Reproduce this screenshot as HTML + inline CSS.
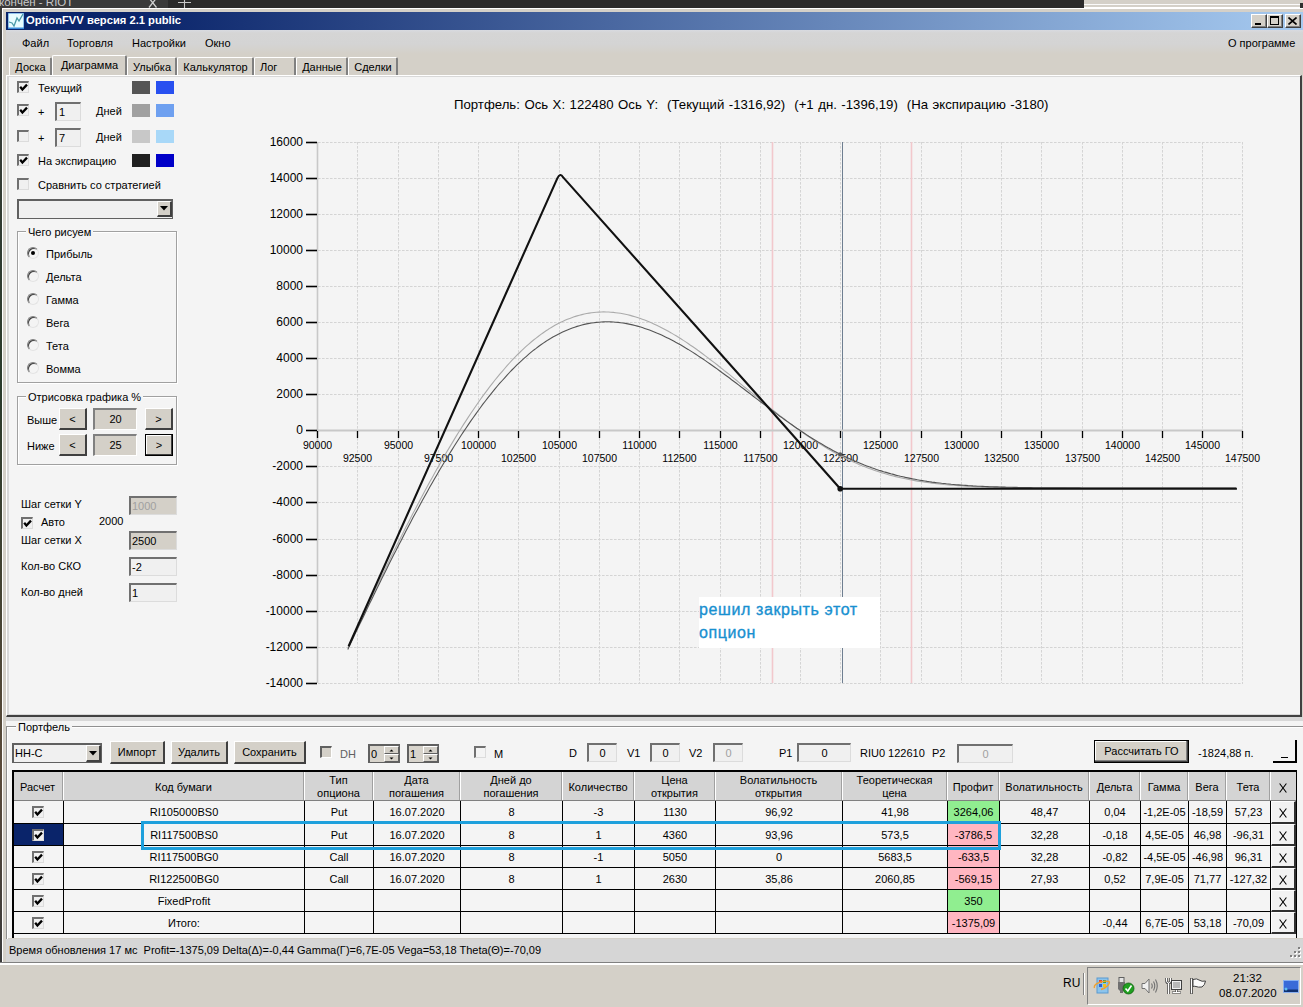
<!DOCTYPE html><html><head><meta charset="utf-8"><style>
*{margin:0;padding:0;box-sizing:border-box}
html,body{width:1303px;height:1007px;overflow:hidden;background:#d4d0c8;font-family:"Liberation Sans", sans-serif;font-size:11px;color:#000}
.ab{position:absolute}
.t{position:absolute;white-space:pre;line-height:13px}
.cb{position:absolute;width:12px;height:12px;background:#f0f0f0;border-top:2px solid #707070;border-left:2px solid #707070;border-right:1px solid #dcdcdc;border-bottom:1px solid #dcdcdc}
.cb svg{position:absolute;left:0px;top:0px}
.edit{position:absolute;background:#f0f0f0;border-top:2px solid #707070;border-left:2px solid #707070;border-right:1px solid #dcdcdc;border-bottom:1px solid #dcdcdc}
.btn{position:absolute;background:#d4d0c8;border-top:1px solid #fff;border-left:1px solid #fff;border-right:2px solid #404040;border-bottom:2px solid #404040;text-align:center}
.grp{position:absolute;border:1px solid #a0a0a0;box-shadow:inset 1px 1px 0 #fff, 1px 1px 0 #fff}
.rad{position:absolute;width:12px;height:12px;border-radius:50%;background:#f4f4f4;border:1px solid;border-color:#808080 #e4e4e4 #e4e4e4 #808080;box-shadow:inset 1px 1px 0 #404040}
</style></head><body>

<div class="ab" style="left:0;top:0;width:1084px;height:8px;background:#2b2b2b"></div>
<div class="ab" style="left:0;top:0;width:168px;height:8px;background:#3a3a3a"></div>
<div class="t" style="left:-1px;top:-4px;color:#c8c8c8;font-size:11.5px">кончен - RIOT</div>
<svg class="ab" style="left:140px;top:0" width="60" height="8"><path d="M9,-2 L16.5,7.5 M16.5,-2 L9,7.5" stroke="#d0d0d0" stroke-width="1.3"/><path d="M38,2.5 L51,2.5 M44.5,-3 L44.5,8" stroke="#c8c8c8" stroke-width="1.1"/></svg>
<div class="ab" style="left:1084px;top:0;width:219px;height:8px;background:#d4d0c8;border-bottom:1px solid #fff"></div>
<div class="ab" style="left:1084px;top:4px;width:217px;height:1px;background:#fafafa"></div>
<div class="ab" style="left:1300px;top:3px;width:3px;height:5px;background:#303030"></div>
<div class="ab" style="left:0;top:8px;width:2px;height:954px;background:linear-gradient(#3a3a3a,#2a3a2a 40%,#5a4a3a 80%,#3a3a3a)"></div>
<div class="ab" style="left:2px;top:8px;width:1301px;height:954px;background:#d4d0c8;border-top:1px solid #fff;border-left:1px solid #fff"></div>
<div class="ab" style="left:6px;top:12px;width:1297px;height:18px;background:linear-gradient(90deg,#0a246a 0%,#0a246a 10%,#a6caf0 100%)"></div>
<svg class="ab" style="left:8px;top:13px" width="16" height="16" viewBox="0 0 16 16">
<rect x="0" y="0" width="16" height="16" fill="#3a8ad8"/><rect x="0.5" y="0.5" width="15" height="14" fill="#e8fcff"/>
<polyline points="1,9 4,10 6,13 9,5 11,8 15,1" fill="none" stroke="#4a9aa8" stroke-width="1.3"/></svg>
<div class="t" style="left:26px;top:14px;color:#fff;font-weight:bold;font-size:11.2px">OptionFVV версия 2.1 public</div>
<div class="btn" style="left:1251px;top:14px;width:16px;height:14px;border-right:1px solid #404040;border-bottom:1px solid #404040;box-shadow:inset -1px -1px 0 #808080"></div>
<div class="btn" style="left:1267px;top:14px;width:16px;height:14px;border-right:1px solid #404040;border-bottom:1px solid #404040;box-shadow:inset -1px -1px 0 #808080"></div>
<div class="btn" style="left:1285px;top:14px;width:16px;height:14px;border-right:1px solid #404040;border-bottom:1px solid #404040;box-shadow:inset -1px -1px 0 #808080"></div>
<div class="ab" style="left:1255px;top:23px;width:6px;height:2px;background:#000"></div>
<div class="ab" style="left:1270px;top:16px;width:9px;height:9px;border:1px solid #000;border-top-width:2px"></div>
<svg class="ab" style="left:1288px;top:17px" width="9" height="8"><path d="M0.5,0.5 L8.5,7.5 M8.5,0.5 L0.5,7.5" stroke="#000" stroke-width="1.6"/></svg>
<div class="ab" style="left:6px;top:30px;width:1297px;height:24px;background:linear-gradient(#d8dae0 0px,#d5d5d5 3px,#d4d4d4 14px,#d4d0c8 24px)"></div>
<div class="t" style="left:22px;top:37px">Файл</div>
<div class="t" style="left:67px;top:37px">Торговля</div>
<div class="t" style="left:132px;top:37px">Настройки</div>
<div class="t" style="left:205px;top:37px">Окно</div>
<div class="t" style="left:1228px;top:37px">О программе</div>
<div class="ab" style="left:6px;top:54px;width:1297px;height:22px;background:#d4d0c8"></div>
<div class="ab" style="left:9px;top:57px;width:43px;height:19px;background:#d4d0c8;border-top:1px solid #fff;border-left:1px solid #fff;border-right:2px solid #808080;border-radius:2px 2px 0 0"></div>
<div class="t" style="left:9px;width:43px;text-align:center;top:61px">Доска</div>
<div class="ab" style="left:52px;top:55px;width:75px;height:21px;background:#d4d0c8;border-top:1px solid #fff;border-left:1px solid #fff;border-right:2px solid #808080;border-radius:2px 2px 0 0"></div>
<div class="t" style="left:52px;width:75px;text-align:center;top:59px">Диаграмма</div>
<div class="ab" style="left:127px;top:57px;width:50px;height:19px;background:#d4d0c8;border-top:1px solid #fff;border-left:1px solid #fff;border-right:2px solid #808080;border-radius:2px 2px 0 0"></div>
<div class="t" style="left:127px;width:50px;text-align:center;top:61px">Улыбка</div>
<div class="ab" style="left:177px;top:57px;width:77px;height:19px;background:#d4d0c8;border-top:1px solid #fff;border-left:1px solid #fff;border-right:2px solid #808080;border-radius:2px 2px 0 0"></div>
<div class="t" style="left:177px;width:77px;text-align:center;top:61px">Калькулятор</div>
<div class="ab" style="left:254px;top:57px;width:42px;height:19px;background:#d4d0c8;border-top:1px solid #fff;border-left:1px solid #fff;border-right:2px solid #808080;border-radius:2px 2px 0 0"></div>
<div class="t" style="left:260px;top:61px">Лог</div>
<div class="ab" style="left:296px;top:57px;width:52px;height:19px;background:#d4d0c8;border-top:1px solid #fff;border-left:1px solid #fff;border-right:2px solid #808080;border-radius:2px 2px 0 0"></div>
<div class="t" style="left:296px;width:52px;text-align:center;top:61px">Данные</div>
<div class="ab" style="left:348px;top:57px;width:50px;height:19px;background:#d4d0c8;border-top:1px solid #fff;border-left:1px solid #fff;border-right:2px solid #808080;border-radius:2px 2px 0 0"></div>
<div class="t" style="left:348px;width:50px;text-align:center;top:61px">Сделки</div>
<div class="ab" style="left:6px;top:75px;width:1296px;height:642px;border-top:1px solid #fff;border-left:1px solid #fff;border-right:2px solid #404040;border-bottom:2px solid #404040;background:#d8d8d8"></div>
<div class="ab" style="left:9px;top:77px;width:1291px;height:637px;background:#f4f4f4"></div>
<div class="cb" style="left:17px;top:81px"><svg width="9" height="9" viewBox="0 0 9 9"><path d="M1.2,3.8 L3.4,6.6 L8,1.6" fill="none" stroke="#000" stroke-width="2.3"/></svg></div>
<div class="t" style="left:38px;top:82px">Текущий</div>
<div class="ab" style="left:132px;top:81px;width:18px;height:13px;background:#555555"></div>
<div class="ab" style="left:156px;top:81px;width:18px;height:13px;background:#2850f0"></div>
<div class="cb" style="left:17px;top:104px"><svg width="9" height="9" viewBox="0 0 9 9"><path d="M1.2,3.8 L3.4,6.6 L8,1.6" fill="none" stroke="#000" stroke-width="2.3"/></svg></div>
<div class="t" style="left:38px;top:106px">+</div>
<div class="edit" style="left:55px;top:102px;width:26px;height:19px"><div class="t" style="left:2px;top:2px">1</div></div>
<div class="t" style="left:96px;top:105px">Дней</div>
<div class="ab" style="left:132px;top:104px;width:18px;height:13px;background:#a0a0a0"></div>
<div class="ab" style="left:156px;top:104px;width:18px;height:13px;background:#6ea0f0"></div>
<div class="cb" style="left:17px;top:130px"></div>
<div class="t" style="left:38px;top:132px">+</div>
<div class="edit" style="left:55px;top:128px;width:26px;height:19px"><div class="t" style="left:2px;top:2px">7</div></div>
<div class="t" style="left:96px;top:131px">Дней</div>
<div class="ab" style="left:132px;top:130px;width:18px;height:13px;background:#c8c8c8"></div>
<div class="ab" style="left:156px;top:130px;width:18px;height:13px;background:#a8d8f8"></div>
<div class="cb" style="left:17px;top:154px"><svg width="9" height="9" viewBox="0 0 9 9"><path d="M1.2,3.8 L3.4,6.6 L8,1.6" fill="none" stroke="#000" stroke-width="2.3"/></svg></div>
<div class="t" style="left:38px;top:155px">На экспирацию</div>
<div class="ab" style="left:132px;top:154px;width:18px;height:13px;background:#202020"></div>
<div class="ab" style="left:156px;top:154px;width:18px;height:13px;background:#0000c8"></div>
<div class="cb" style="left:17px;top:178px"></div>
<div class="t" style="left:38px;top:179px">Сравнить со стратегией</div>
<div class="edit" style="left:17px;top:199px;width:156px;height:20px;border-color:#606060 #606060 #606060 #606060;border-width:2px 1px 1px 2px"></div>
<div class="btn" style="left:157px;top:201px;width:15px;height:16px"></div>
<svg class="ab" style="left:160px;top:206px" width="9" height="5"><path d="M0,0 L8,0 L4,4.5Z" fill="#000"/></svg>
<div class="grp" style="left:17px;top:231px;width:160px;height:152px"></div>
<div class="t" style="left:26px;top:226px;background:#f4f4f4;padding:0 2px">Чего рисуем</div>
<div class="rad" style="left:27px;top:247px"></div>
<div class="ab" style="left:31px;top:251px;width:4px;height:4px;border-radius:50%;background:#000"></div>
<div class="t" style="left:46px;top:248px">Прибыль</div>
<div class="rad" style="left:27px;top:270px"></div>
<div class="t" style="left:46px;top:271px">Дельта</div>
<div class="rad" style="left:27px;top:293px"></div>
<div class="t" style="left:46px;top:294px">Гамма</div>
<div class="rad" style="left:27px;top:316px"></div>
<div class="t" style="left:46px;top:317px">Вега</div>
<div class="rad" style="left:27px;top:339px"></div>
<div class="t" style="left:46px;top:340px">Тета</div>
<div class="rad" style="left:27px;top:362px"></div>
<div class="t" style="left:46px;top:363px">Вомма</div>
<div class="grp" style="left:17px;top:396px;width:160px;height:69px"></div>
<div class="t" style="left:26px;top:391px;background:#f4f4f4;padding:0 2px">Отрисовка графика %</div>
<div class="t" style="left:27px;top:414px">Выше</div>
<div class="btn" style="left:59px;top:408px;width:28px;height:22px;line-height:20px">&lt;</div>
<div class="ab" style="left:93px;top:408px;width:44px;height:22px;background:#d4d0c8;border-top:2px solid #808080;border-left:2px solid #808080;border-bottom:1px solid #fff;border-right:1px solid #fff;text-align:center;line-height:18px">20</div>
<div class="btn" style="left:145px;top:408px;width:28px;height:22px;line-height:20px;">&gt;</div>
<div class="t" style="left:27px;top:440px">Ниже</div>
<div class="btn" style="left:59px;top:434px;width:28px;height:22px;line-height:20px">&lt;</div>
<div class="ab" style="left:93px;top:434px;width:44px;height:22px;background:#d4d0c8;border-top:2px solid #808080;border-left:2px solid #808080;border-bottom:1px solid #fff;border-right:1px solid #fff;text-align:center;line-height:18px">25</div>
<div class="btn" style="left:145px;top:434px;width:28px;height:22px;line-height:20px;border:1px solid #000;box-shadow:inset -1px -1px 0 #404040, inset 1px 1px 0 #fff">&gt;</div>
<div class="t" style="left:21px;top:498px">Шаг сетки Y</div>
<div class="edit" style="left:129px;top:496px;width:48px;height:19px;background:#d4d0c8;color:#a0a0a0"><div class="t" style="left:1px;top:2px">1000</div></div>
<div class="cb" style="left:21px;top:517px"><svg width="9" height="9" viewBox="0 0 9 9"><path d="M1.2,3.8 L3.4,6.6 L8,1.6" fill="none" stroke="#000" stroke-width="2.3"/></svg></div>
<div class="t" style="left:41px;top:516px">Авто</div>
<div class="t" style="left:99px;top:515px">2000</div>
<div class="t" style="left:21px;top:534px">Шаг сетки X</div>
<div class="edit" style="left:129px;top:531px;width:48px;height:19px;background:#d4d0c8"><div class="t" style="left:1px;top:2px">2500</div></div>
<div class="t" style="left:21px;top:560px">Кол-во СКО</div>
<div class="edit" style="left:129px;top:557px;width:48px;height:19px"><div class="t" style="left:1px;top:2px">-2</div></div>
<div class="t" style="left:21px;top:586px">Кол-во дней</div>
<div class="edit" style="left:129px;top:583px;width:48px;height:19px"><div class="t" style="left:1px;top:2px">1</div></div>
<div class="t" style="left:454px;top:98px;font-size:13.2px;word-spacing:0.85px">Портфель: Ось X: 122480 Ось Y:  (Текущий -1316,92)  (+1 дн. -1396,19)  (На экспирацию -3180)</div>
<svg class="ab" style="left:0;top:0" width="1303" height="720">
<line x1="317.5" y1="142" x2="317.5" y2="683" stroke="#d4d4d4" stroke-dasharray="2.6,1.4"/>
<line x1="357.5" y1="142" x2="357.5" y2="683" stroke="#d4d4d4" stroke-dasharray="2.6,1.4"/>
<line x1="398.5" y1="142" x2="398.5" y2="683" stroke="#d4d4d4" stroke-dasharray="2.6,1.4"/>
<line x1="438.5" y1="142" x2="438.5" y2="683" stroke="#d4d4d4" stroke-dasharray="2.6,1.4"/>
<line x1="478.5" y1="142" x2="478.5" y2="683" stroke="#d4d4d4" stroke-dasharray="2.6,1.4"/>
<line x1="518.5" y1="142" x2="518.5" y2="683" stroke="#d4d4d4" stroke-dasharray="2.6,1.4"/>
<line x1="559.5" y1="142" x2="559.5" y2="683" stroke="#d4d4d4" stroke-dasharray="2.6,1.4"/>
<line x1="599.5" y1="142" x2="599.5" y2="683" stroke="#d4d4d4" stroke-dasharray="2.6,1.4"/>
<line x1="639.5" y1="142" x2="639.5" y2="683" stroke="#d4d4d4" stroke-dasharray="2.6,1.4"/>
<line x1="679.5" y1="142" x2="679.5" y2="683" stroke="#d4d4d4" stroke-dasharray="2.6,1.4"/>
<line x1="720.5" y1="142" x2="720.5" y2="683" stroke="#d4d4d4" stroke-dasharray="2.6,1.4"/>
<line x1="760.5" y1="142" x2="760.5" y2="683" stroke="#d4d4d4" stroke-dasharray="2.6,1.4"/>
<line x1="800.5" y1="142" x2="800.5" y2="683" stroke="#d4d4d4" stroke-dasharray="2.6,1.4"/>
<line x1="840.5" y1="142" x2="840.5" y2="683" stroke="#d4d4d4" stroke-dasharray="2.6,1.4"/>
<line x1="880.5" y1="142" x2="880.5" y2="683" stroke="#d4d4d4" stroke-dasharray="2.6,1.4"/>
<line x1="921.5" y1="142" x2="921.5" y2="683" stroke="#d4d4d4" stroke-dasharray="2.6,1.4"/>
<line x1="961.5" y1="142" x2="961.5" y2="683" stroke="#d4d4d4" stroke-dasharray="2.6,1.4"/>
<line x1="1001.5" y1="142" x2="1001.5" y2="683" stroke="#d4d4d4" stroke-dasharray="2.6,1.4"/>
<line x1="1041.5" y1="142" x2="1041.5" y2="683" stroke="#d4d4d4" stroke-dasharray="2.6,1.4"/>
<line x1="1082.5" y1="142" x2="1082.5" y2="683" stroke="#d4d4d4" stroke-dasharray="2.6,1.4"/>
<line x1="1122.5" y1="142" x2="1122.5" y2="683" stroke="#d4d4d4" stroke-dasharray="2.6,1.4"/>
<line x1="1162.5" y1="142" x2="1162.5" y2="683" stroke="#d4d4d4" stroke-dasharray="2.6,1.4"/>
<line x1="1202.5" y1="142" x2="1202.5" y2="683" stroke="#d4d4d4" stroke-dasharray="2.6,1.4"/>
<line x1="1242.5" y1="142" x2="1242.5" y2="683" stroke="#d4d4d4" stroke-dasharray="2.6,1.4"/>
<line x1="318" y1="142.5" x2="1243" y2="142.5" stroke="#d4d4d4" stroke-dasharray="2.6,1.4"/>
<line x1="318" y1="178.5" x2="1243" y2="178.5" stroke="#d4d4d4" stroke-dasharray="2.6,1.4"/>
<line x1="318" y1="214.5" x2="1243" y2="214.5" stroke="#d4d4d4" stroke-dasharray="2.6,1.4"/>
<line x1="318" y1="250.5" x2="1243" y2="250.5" stroke="#d4d4d4" stroke-dasharray="2.6,1.4"/>
<line x1="318" y1="286.5" x2="1243" y2="286.5" stroke="#d4d4d4" stroke-dasharray="2.6,1.4"/>
<line x1="318" y1="322.5" x2="1243" y2="322.5" stroke="#d4d4d4" stroke-dasharray="2.6,1.4"/>
<line x1="318" y1="358.5" x2="1243" y2="358.5" stroke="#d4d4d4" stroke-dasharray="2.6,1.4"/>
<line x1="318" y1="394.5" x2="1243" y2="394.5" stroke="#d4d4d4" stroke-dasharray="2.6,1.4"/>
<line x1="318" y1="430.5" x2="1243" y2="430.5" stroke="#d4d4d4" stroke-dasharray="2.6,1.4"/>
<line x1="318" y1="466.5" x2="1243" y2="466.5" stroke="#d4d4d4" stroke-dasharray="2.6,1.4"/>
<line x1="318" y1="502.5" x2="1243" y2="502.5" stroke="#d4d4d4" stroke-dasharray="2.6,1.4"/>
<line x1="318" y1="539.5" x2="1243" y2="539.5" stroke="#d4d4d4" stroke-dasharray="2.6,1.4"/>
<line x1="318" y1="575.5" x2="1243" y2="575.5" stroke="#d4d4d4" stroke-dasharray="2.6,1.4"/>
<line x1="318" y1="611.5" x2="1243" y2="611.5" stroke="#d4d4d4" stroke-dasharray="2.6,1.4"/>
<line x1="318" y1="647.5" x2="1243" y2="647.5" stroke="#d4d4d4" stroke-dasharray="2.6,1.4"/>
<line x1="318" y1="683.5" x2="1243" y2="683.5" stroke="#d4d4d4" stroke-dasharray="2.6,1.4"/>
<line x1="772.5" y1="142" x2="772.5" y2="683" stroke="#f2c8cc" stroke-width="1.6"/>
<line x1="911.5" y1="142" x2="911.5" y2="683" stroke="#f2c8cc" stroke-width="1.6"/>
<line x1="842.5" y1="142" x2="842.5" y2="683" stroke="#6e7e90" stroke-width="1"/>
<line x1="317.5" y1="142" x2="317.5" y2="683" stroke="#c8c8c8" stroke-width="1.6"/>
<line x1="317" y1="430.5" x2="1243" y2="430.5" stroke="#c8c8c8" stroke-width="2"/>
<line x1="306" y1="142.5" x2="317" y2="142.5" stroke="#000" stroke-width="1.6"/>
<text x="303" y="146.0" text-anchor="end" font-size="12" font-family="Liberation Sans">16000</text>
<line x1="306" y1="178.5" x2="317" y2="178.5" stroke="#000" stroke-width="1.6"/>
<text x="303" y="182.0" text-anchor="end" font-size="12" font-family="Liberation Sans">14000</text>
<line x1="306" y1="214.5" x2="317" y2="214.5" stroke="#000" stroke-width="1.6"/>
<text x="303" y="218.0" text-anchor="end" font-size="12" font-family="Liberation Sans">12000</text>
<line x1="306" y1="250.5" x2="317" y2="250.5" stroke="#000" stroke-width="1.6"/>
<text x="303" y="254.0" text-anchor="end" font-size="12" font-family="Liberation Sans">10000</text>
<line x1="306" y1="286.5" x2="317" y2="286.5" stroke="#000" stroke-width="1.6"/>
<text x="303" y="290.0" text-anchor="end" font-size="12" font-family="Liberation Sans">8000</text>
<line x1="306" y1="322.5" x2="317" y2="322.5" stroke="#000" stroke-width="1.6"/>
<text x="303" y="326.0" text-anchor="end" font-size="12" font-family="Liberation Sans">6000</text>
<line x1="306" y1="358.5" x2="317" y2="358.5" stroke="#000" stroke-width="1.6"/>
<text x="303" y="362.0" text-anchor="end" font-size="12" font-family="Liberation Sans">4000</text>
<line x1="306" y1="394.5" x2="317" y2="394.5" stroke="#000" stroke-width="1.6"/>
<text x="303" y="398.0" text-anchor="end" font-size="12" font-family="Liberation Sans">2000</text>
<line x1="306" y1="430.5" x2="317" y2="430.5" stroke="#000" stroke-width="1.6"/>
<text x="303" y="434.0" text-anchor="end" font-size="12" font-family="Liberation Sans">0</text>
<line x1="306" y1="466.5" x2="317" y2="466.5" stroke="#000" stroke-width="1.6"/>
<text x="303" y="470.0" text-anchor="end" font-size="12" font-family="Liberation Sans">-2000</text>
<line x1="306" y1="502.5" x2="317" y2="502.5" stroke="#000" stroke-width="1.6"/>
<text x="303" y="506.0" text-anchor="end" font-size="12" font-family="Liberation Sans">-4000</text>
<line x1="306" y1="539.5" x2="317" y2="539.5" stroke="#000" stroke-width="1.6"/>
<text x="303" y="543.0" text-anchor="end" font-size="12" font-family="Liberation Sans">-6000</text>
<line x1="306" y1="575.5" x2="317" y2="575.5" stroke="#000" stroke-width="1.6"/>
<text x="303" y="579.0" text-anchor="end" font-size="12" font-family="Liberation Sans">-8000</text>
<line x1="306" y1="611.5" x2="317" y2="611.5" stroke="#000" stroke-width="1.6"/>
<text x="303" y="615.0" text-anchor="end" font-size="12" font-family="Liberation Sans">-10000</text>
<line x1="306" y1="647.5" x2="317" y2="647.5" stroke="#000" stroke-width="1.6"/>
<text x="303" y="651.0" text-anchor="end" font-size="12" font-family="Liberation Sans">-12000</text>
<line x1="306" y1="683.5" x2="317" y2="683.5" stroke="#000" stroke-width="1.6"/>
<text x="303" y="687.0" text-anchor="end" font-size="12" font-family="Liberation Sans">-14000</text>
<line x1="317.5" y1="431" x2="317.5" y2="438" stroke="#000" stroke-width="1.3"/>
<text x="317.5" y="449" text-anchor="middle" font-size="10.5" font-family="Liberation Sans">90000</text>
<line x1="357.5" y1="431" x2="357.5" y2="438" stroke="#000" stroke-width="1.3"/>
<text x="357.5" y="462" text-anchor="middle" font-size="10.5" font-family="Liberation Sans">92500</text>
<line x1="398.5" y1="431" x2="398.5" y2="438" stroke="#000" stroke-width="1.3"/>
<text x="398.5" y="449" text-anchor="middle" font-size="10.5" font-family="Liberation Sans">95000</text>
<line x1="438.5" y1="431" x2="438.5" y2="438" stroke="#000" stroke-width="1.3"/>
<text x="438.5" y="462" text-anchor="middle" font-size="10.5" font-family="Liberation Sans">97500</text>
<line x1="478.5" y1="431" x2="478.5" y2="438" stroke="#000" stroke-width="1.3"/>
<text x="478.5" y="449" text-anchor="middle" font-size="10.5" font-family="Liberation Sans">100000</text>
<line x1="518.5" y1="431" x2="518.5" y2="438" stroke="#000" stroke-width="1.3"/>
<text x="518.5" y="462" text-anchor="middle" font-size="10.5" font-family="Liberation Sans">102500</text>
<line x1="559.5" y1="431" x2="559.5" y2="438" stroke="#000" stroke-width="1.3"/>
<text x="559.5" y="449" text-anchor="middle" font-size="10.5" font-family="Liberation Sans">105000</text>
<line x1="599.5" y1="431" x2="599.5" y2="438" stroke="#000" stroke-width="1.3"/>
<text x="599.5" y="462" text-anchor="middle" font-size="10.5" font-family="Liberation Sans">107500</text>
<line x1="639.5" y1="431" x2="639.5" y2="438" stroke="#000" stroke-width="1.3"/>
<text x="639.5" y="449" text-anchor="middle" font-size="10.5" font-family="Liberation Sans">110000</text>
<line x1="679.5" y1="431" x2="679.5" y2="438" stroke="#000" stroke-width="1.3"/>
<text x="679.5" y="462" text-anchor="middle" font-size="10.5" font-family="Liberation Sans">112500</text>
<line x1="720.5" y1="431" x2="720.5" y2="438" stroke="#000" stroke-width="1.3"/>
<text x="720.5" y="449" text-anchor="middle" font-size="10.5" font-family="Liberation Sans">115000</text>
<line x1="760.5" y1="431" x2="760.5" y2="438" stroke="#000" stroke-width="1.3"/>
<text x="760.5" y="462" text-anchor="middle" font-size="10.5" font-family="Liberation Sans">117500</text>
<line x1="800.5" y1="431" x2="800.5" y2="438" stroke="#000" stroke-width="1.3"/>
<text x="800.5" y="449" text-anchor="middle" font-size="10.5" font-family="Liberation Sans">120000</text>
<line x1="840.5" y1="431" x2="840.5" y2="438" stroke="#000" stroke-width="1.3"/>
<text x="840.5" y="462" text-anchor="middle" font-size="10.5" font-family="Liberation Sans">122500</text>
<line x1="880.5" y1="431" x2="880.5" y2="438" stroke="#000" stroke-width="1.3"/>
<text x="880.5" y="449" text-anchor="middle" font-size="10.5" font-family="Liberation Sans">125000</text>
<line x1="921.5" y1="431" x2="921.5" y2="438" stroke="#000" stroke-width="1.3"/>
<text x="921.5" y="462" text-anchor="middle" font-size="10.5" font-family="Liberation Sans">127500</text>
<line x1="961.5" y1="431" x2="961.5" y2="438" stroke="#000" stroke-width="1.3"/>
<text x="961.5" y="449" text-anchor="middle" font-size="10.5" font-family="Liberation Sans">130000</text>
<line x1="1001.5" y1="431" x2="1001.5" y2="438" stroke="#000" stroke-width="1.3"/>
<text x="1001.5" y="462" text-anchor="middle" font-size="10.5" font-family="Liberation Sans">132500</text>
<line x1="1041.5" y1="431" x2="1041.5" y2="438" stroke="#000" stroke-width="1.3"/>
<text x="1041.5" y="449" text-anchor="middle" font-size="10.5" font-family="Liberation Sans">135000</text>
<line x1="1082.5" y1="431" x2="1082.5" y2="438" stroke="#000" stroke-width="1.3"/>
<text x="1082.5" y="462" text-anchor="middle" font-size="10.5" font-family="Liberation Sans">137500</text>
<line x1="1122.5" y1="431" x2="1122.5" y2="438" stroke="#000" stroke-width="1.3"/>
<text x="1122.5" y="449" text-anchor="middle" font-size="10.5" font-family="Liberation Sans">140000</text>
<line x1="1162.5" y1="431" x2="1162.5" y2="438" stroke="#000" stroke-width="1.3"/>
<text x="1162.5" y="462" text-anchor="middle" font-size="10.5" font-family="Liberation Sans">142500</text>
<line x1="1202.5" y1="431" x2="1202.5" y2="438" stroke="#000" stroke-width="1.3"/>
<text x="1202.5" y="449" text-anchor="middle" font-size="10.5" font-family="Liberation Sans">145000</text>
<line x1="1242.5" y1="431" x2="1242.5" y2="438" stroke="#000" stroke-width="1.3"/>
<text x="1242.5" y="462" text-anchor="middle" font-size="10.5" font-family="Liberation Sans">147500</text>
<polyline points="347.8,647.9 350.2,642.7 352.6,637.5 355.0,632.3 357.4,627.2 359.8,622.0 362.3,616.9 364.7,611.8 367.1,606.7 369.5,601.6 371.9,596.5 374.3,591.4 376.7,586.4 379.2,581.4 381.6,576.4 384.0,571.4 386.4,566.4 388.8,561.5 391.2,556.6 393.6,551.7 396.1,546.8 398.5,542.0 400.9,537.2 403.3,532.4 405.7,527.6 408.1,522.9 410.5,518.2 412.9,513.5 415.4,508.9 417.8,504.3 420.2,499.7 422.6,495.2 425.0,490.7 427.4,486.2 429.8,481.8 432.3,477.4 434.7,473.1 437.1,468.8 439.5,464.5 441.9,460.3 444.3,456.1 446.7,452.0 449.2,447.9 451.6,443.9 454.0,439.9 456.4,435.9 458.8,432.0 461.2,428.2 463.6,424.4 466.1,420.6 468.5,416.9 470.9,413.3 473.3,409.7 475.7,406.2 478.1,402.7 480.5,399.3 482.9,395.9 485.4,392.6 487.8,389.4 490.2,386.2 492.6,383.1 495.0,380.0 497.4,377.1 499.8,374.1 502.3,371.3 504.7,368.5 507.1,365.7 509.5,363.0 511.9,360.4 514.3,357.9 516.7,355.4 519.2,353.0 521.6,350.7 524.0,348.4 526.4,346.2 528.8,344.1 531.2,342.0 533.6,340.0 536.1,338.1 538.5,336.2 540.9,334.4 543.3,332.7 545.7,331.0 548.1,329.5 550.5,327.9 552.9,326.5 555.4,325.1 557.8,323.8 560.2,322.6 562.6,321.4 565.0,320.3 567.4,319.3 569.8,318.4 572.3,317.5 574.7,316.6 577.1,315.9 579.5,315.2 581.9,314.6 584.3,314.0 586.7,313.5 589.2,313.1 591.6,312.8 594.0,312.5 596.4,312.2 598.8,312.1 601.2,312.0 603.6,311.9 606.1,312.0 608.5,312.0 610.9,312.2 613.3,312.4 615.7,312.7 618.1,313.0 620.5,313.3 622.9,313.8 625.4,314.3 627.8,314.8 630.2,315.4 632.6,316.1 635.0,316.8 637.4,317.5 639.8,318.3 642.3,319.2 644.7,320.1 647.1,321.0 649.5,322.0 651.9,323.1 654.3,324.2 656.7,325.3 659.2,326.5 661.6,327.7 664.0,328.9 666.4,330.2 668.8,331.6 671.2,332.9 673.6,334.4 676.1,335.8 678.5,337.3 680.9,338.8 683.3,340.4 685.7,341.9 688.1,343.5 690.5,345.2 692.9,346.8 695.4,348.5 697.8,350.3 700.2,352.0 702.6,353.8 705.0,355.6 707.4,357.4 709.8,359.2 712.3,361.1 714.7,362.9 717.1,364.8 719.5,366.7 721.9,368.6 724.3,370.6 726.7,372.5 729.2,374.4 731.6,376.4 734.0,378.4 736.4,380.3 738.8,382.3 741.2,384.3 743.6,386.3 746.1,388.3 748.5,390.3 750.9,392.2 753.3,394.2 755.7,396.2 758.1,398.2 760.5,400.2 762.9,402.1 765.4,404.1 767.8,406.0 770.2,408.0 772.6,409.9 775.0,411.8 777.4,413.7 779.8,415.6 782.3,417.5 784.7,419.3 787.1,421.2 789.5,423.0 791.9,424.8 794.3,426.6 796.7,428.3 799.2,430.1 801.6,431.8 804.0,433.5 806.4,435.2 808.8,436.8 811.2,438.4 813.6,440.0 816.1,441.6 818.5,443.1 820.9,444.6 823.3,446.1 825.7,447.5 828.1,449.0 830.5,450.3 832.9,451.7 835.4,453.0 837.8,454.3 840.2,455.6 842.6,456.8 845.0,458.1 847.4,459.2 849.8,460.4 852.3,461.5 854.7,462.6 857.1,463.6 859.5,464.7 861.9,465.7 864.3,466.6 866.7,467.6 869.2,468.5 871.6,469.3 874.0,470.2 876.4,471.0 878.8,471.8 881.2,472.6 883.6,473.3 886.1,474.0 888.5,474.7 890.9,475.4 893.3,476.0 895.7,476.6 898.1,477.2 900.5,477.7 902.9,478.3 905.4,478.8 907.8,479.3 910.2,479.8 912.6,480.2 915.0,480.6 917.4,481.1 919.8,481.4 922.3,481.8 924.7,482.2 927.1,482.5 929.5,482.8 931.9,483.1 934.3,483.4 936.7,483.7 939.2,484.0 941.6,484.2 944.0,484.5 946.4,484.7 948.8,484.9 951.2,485.1 953.6,485.3 956.1,485.5 958.5,485.6 960.9,485.8 963.3,485.9 965.7,486.1 968.1,486.2 970.5,486.3 972.9,486.5 975.4,486.6 977.8,486.7 980.2,486.8 982.6,486.9 985.0,486.9 987.4,487.0 989.8,487.1 992.3,487.2 994.7,487.2 997.1,487.3 999.5,487.3 1001.9,487.4 1004.3,487.4 1006.7,487.5 1009.2,487.5 1011.6,487.6 1014.0,487.6 1016.4,487.6 1018.8,487.7 1021.2,487.7 1023.6,487.7 1026.1,487.7 1028.5,487.8 1030.9,487.8 1033.3,487.8 1035.7,487.8 1038.1,487.8 1040.5,487.9 1042.9,487.9 1045.4,487.9 1047.8,487.9 1050.2,487.9 1052.6,487.9 1055.0,487.9 1057.4,487.9 1059.8,487.9 1062.3,487.9 1064.7,487.9 1067.1,488.0 1069.5,488.0 1071.9,488.0 1074.3,488.0 1076.7,488.0 1079.2,488.0 1081.6,488.0 1084.0,488.0 1086.4,488.0 1088.8,488.0 1091.2,488.0 1093.6,488.0 1096.1,488.0 1098.5,488.0 1100.9,488.0 1103.3,488.0 1105.7,488.0 1108.1,488.0 1110.5,488.0 1112.9,488.0 1115.4,488.0 1117.8,488.0 1120.2,488.0 1122.6,488.0 1125.0,488.0 1127.4,488.0 1129.8,488.0 1132.3,488.0 1134.7,488.0 1137.1,488.0 1139.5,488.0 1141.9,488.0 1144.3,488.0 1146.7,488.0 1149.2,488.0 1151.6,488.0 1154.0,488.0 1156.4,488.0 1158.8,488.0 1161.2,488.0 1163.6,488.0 1166.1,488.0 1168.5,488.0 1170.9,488.0 1173.3,488.0 1175.7,488.0 1178.1,488.0 1180.5,488.0 1182.9,488.0 1185.4,488.0 1187.8,488.0 1190.2,488.0 1192.6,488.0 1195.0,488.0 1197.4,488.0 1199.8,488.0 1202.3,488.0 1204.7,488.0 1207.1,488.0 1209.5,488.0 1211.9,488.0 1214.3,488.0 1216.7,488.0 1219.2,488.0 1221.6,488.0 1224.0,488.0 1226.4,488.0 1228.8,488.0 1231.2,488.0 1233.6,488.0 1236.1,488.0" fill="none" stroke="#ababab" stroke-width="1.1"/>
<circle cx="840.2" cy="455.6" r="2" fill="#ababab"/>
<polyline points="347.8,649.5 350.2,644.3 352.6,639.2 355.0,634.1 357.4,629.0 359.8,623.9 362.3,618.9 364.7,613.9 367.1,608.8 369.5,603.8 371.9,598.9 374.3,593.9 376.7,588.9 379.2,584.0 381.6,579.1 384.0,574.3 386.4,569.4 388.8,564.6 391.2,559.8 393.6,555.0 396.1,550.3 398.5,545.5 400.9,540.9 403.3,536.2 405.7,531.6 408.1,527.0 410.5,522.4 412.9,517.8 415.4,513.3 417.8,508.9 420.2,504.4 422.6,500.0 425.0,495.7 427.4,491.4 429.8,487.1 432.3,482.8 434.7,478.6 437.1,474.5 439.5,470.3 441.9,466.3 444.3,462.2 446.7,458.2 449.2,454.3 451.6,450.4 454.0,446.5 456.4,442.7 458.8,439.0 461.2,435.3 463.6,431.6 466.1,428.0 468.5,424.4 470.9,420.9 473.3,417.5 475.7,414.1 478.1,410.7 480.5,407.5 482.9,404.2 485.4,401.0 487.8,397.9 490.2,394.9 492.6,391.9 495.0,388.9 497.4,386.0 499.8,383.2 502.3,380.5 504.7,377.8 507.1,375.1 509.5,372.5 511.9,370.0 514.3,367.6 516.7,365.2 519.2,362.9 521.6,360.6 524.0,358.4 526.4,356.3 528.8,354.2 531.2,352.2 533.6,350.2 536.1,348.4 538.5,346.5 540.9,344.8 543.3,343.1 545.7,341.5 548.1,339.9 550.5,338.5 552.9,337.0 555.4,335.7 557.8,334.4 560.2,333.2 562.6,332.0 565.0,330.9 567.4,329.9 569.8,328.9 572.3,328.0 574.7,327.2 577.1,326.4 579.5,325.7 581.9,325.0 584.3,324.4 586.7,323.9 589.2,323.4 591.6,323.0 594.0,322.7 596.4,322.4 598.8,322.2 601.2,322.0 603.6,321.9 606.1,321.8 608.5,321.8 610.9,321.9 613.3,322.0 615.7,322.2 618.1,322.4 620.5,322.7 622.9,323.0 625.4,323.4 627.8,323.9 630.2,324.4 632.6,324.9 635.0,325.5 637.4,326.1 639.8,326.8 642.3,327.6 644.7,328.4 647.1,329.2 649.5,330.1 651.9,331.0 654.3,331.9 656.7,333.0 659.2,334.0 661.6,335.1 664.0,336.2 666.4,337.4 668.8,338.6 671.2,339.8 673.6,341.1 676.1,342.4 678.5,343.7 680.9,345.1 683.3,346.5 685.7,348.0 688.1,349.4 690.5,350.9 692.9,352.4 695.4,354.0 697.8,355.6 700.2,357.2 702.6,358.8 705.0,360.4 707.4,362.1 709.8,363.8 712.3,365.5 714.7,367.2 717.1,368.9 719.5,370.7 721.9,372.5 724.3,374.2 726.7,376.0 729.2,377.8 731.6,379.7 734.0,381.5 736.4,383.3 738.8,385.1 741.2,387.0 743.6,388.8 746.1,390.7 748.5,392.5 750.9,394.4 753.3,396.2 755.7,398.1 758.1,399.9 760.5,401.7 762.9,403.6 765.4,405.4 767.8,407.2 770.2,409.0 772.6,410.8 775.0,412.6 777.4,414.4 779.8,416.2 782.3,417.9 784.7,419.7 787.1,421.4 789.5,423.1 791.9,424.8 794.3,426.5 796.7,428.2 799.2,429.8 801.6,431.4 804.0,433.0 806.4,434.6 808.8,436.2 811.2,437.7 813.6,439.2 816.1,440.7 818.5,442.2 820.9,443.6 823.3,445.0 825.7,446.4 828.1,447.8 830.5,449.1 832.9,450.4 835.4,451.7 837.8,452.9 840.2,454.2 842.6,455.4 845.0,456.6 847.4,457.7 849.8,458.8 852.3,459.9 854.7,461.0 857.1,462.0 859.5,463.0 861.9,464.0 864.3,465.0 866.7,465.9 869.2,466.8 871.6,467.7 874.0,468.5 876.4,469.4 878.8,470.2 881.2,470.9 883.6,471.7 886.1,472.4 888.5,473.1 890.9,473.8 893.3,474.4 895.7,475.1 898.1,475.7 900.5,476.3 902.9,476.8 905.4,477.4 907.8,477.9 910.2,478.4 912.6,478.9 915.0,479.3 917.4,479.8 919.8,480.2 922.3,480.6 924.7,481.0 927.1,481.4 929.5,481.7 931.9,482.1 934.3,482.4 936.7,482.7 939.2,483.0 941.6,483.3 944.0,483.5 946.4,483.8 948.8,484.0 951.2,484.3 953.6,484.5 956.1,484.7 958.5,484.9 960.9,485.1 963.3,485.3 965.7,485.4 968.1,485.6 970.5,485.7 972.9,485.9 975.4,486.0 977.8,486.2 980.2,486.3 982.6,486.4 985.0,486.5 987.4,486.6 989.8,486.7 992.3,486.8 994.7,486.9 997.1,486.9 999.5,487.0 1001.9,487.1 1004.3,487.1 1006.7,487.2 1009.2,487.3 1011.6,487.3 1014.0,487.4 1016.4,487.4 1018.8,487.5 1021.2,487.5 1023.6,487.5 1026.1,487.6 1028.5,487.6 1030.9,487.6 1033.3,487.7 1035.7,487.7 1038.1,487.7 1040.5,487.7 1042.9,487.8 1045.4,487.8 1047.8,487.8 1050.2,487.8 1052.6,487.8 1055.0,487.8 1057.4,487.9 1059.8,487.9 1062.3,487.9 1064.7,487.9 1067.1,487.9 1069.5,487.9 1071.9,487.9 1074.3,487.9 1076.7,487.9 1079.2,487.9 1081.6,488.0 1084.0,488.0 1086.4,488.0 1088.8,488.0 1091.2,488.0 1093.6,488.0 1096.1,488.0 1098.5,488.0 1100.9,488.0 1103.3,488.0 1105.7,488.0 1108.1,488.0 1110.5,488.0 1112.9,488.0 1115.4,488.0 1117.8,488.0 1120.2,488.0 1122.6,488.0 1125.0,488.0 1127.4,488.0 1129.8,488.0 1132.3,488.0 1134.7,488.0 1137.1,488.0 1139.5,488.0 1141.9,488.0 1144.3,488.0 1146.7,488.0 1149.2,488.0 1151.6,488.0 1154.0,488.0 1156.4,488.0 1158.8,488.0 1161.2,488.0 1163.6,488.0 1166.1,488.0 1168.5,488.0 1170.9,488.0 1173.3,488.0 1175.7,488.0 1178.1,488.0 1180.5,488.0 1182.9,488.0 1185.4,488.0 1187.8,488.0 1190.2,488.0 1192.6,488.0 1195.0,488.0 1197.4,488.0 1199.8,488.0 1202.3,488.0 1204.7,488.0 1207.1,488.0 1209.5,488.0 1211.9,488.0 1214.3,488.0 1216.7,488.0 1219.2,488.0 1221.6,488.0 1224.0,488.0 1226.4,488.0 1228.8,488.0 1231.2,488.0 1233.6,488.0 1236.1,488.0" fill="none" stroke="#555555" stroke-width="1.1"/>
<circle cx="840.2" cy="454.2" r="2" fill="#555555"/>
<path d="M348.6,646.2 L557.3,178.4 Q560.2,172.2 563.2,177.4 L759.7,397.8 L840.2,488.7 L1236.9,488.7" fill="none" stroke="#111111" stroke-width="2.1" stroke-linejoin="round"/>
<circle cx="840.2" cy="488.7" r="2.8" fill="#111"/>
</svg>
<div class="ab" style="left:699px;top:597px;width:181px;height:51px;background:#fff"></div>
<div class="t" style="left:699px;top:598px;color:#1890d0;font-size:16px;letter-spacing:0.6px;line-height:23px;-webkit-text-stroke:0.35px #1890d0">решил закрыть этот
опцион</div>
<div class="ab" style="left:6px;top:717px;width:1297px;height:4px;background:#d8d8d8"></div>
<div class="ab" style="left:6px;top:721px;width:1297px;height:217px;background:#f4f4f4"></div>
<div class="ab" style="left:6px;top:726px;width:1297px;height:220px;border-top:1px solid #909090;border-left:1px solid #909090;box-shadow:inset 1px 1px 0 #fff"></div>
<div class="t" style="left:16px;top:721px;background:#f4f4f4;padding:0 2px">Портфель</div>
<div class="edit" style="left:12px;top:743px;width:90px;height:20px;background:#f0f0f0;border-color:#606060 #606060 #606060 #606060;border-width:2px 1px 1px 2px"><div class="t" style="left:1px;top:2px">HH-C</div></div>
<div class="btn" style="left:86px;top:745px;width:15px;height:17px"></div>
<svg class="ab" style="left:89px;top:751px" width="9" height="5"><path d="M0,0 L8,0 L4,4.5Z" fill="#000"/></svg>
<div class="btn" style="left:110px;top:741px;width:55px;height:23px;line-height:20px">Импорт</div>
<div class="btn" style="left:171px;top:741px;width:57px;height:23px;line-height:20px">Удалить</div>
<div class="btn" style="left:234px;top:741px;width:72px;height:23px;line-height:20px">Сохранить</div>
<div class="cb" style="left:320px;top:746px;background:#d4d0c8;border-color:#606060 #fff #fff #606060"></div>
<div class="t" style="left:340px;top:748px;color:#606060">DH</div>
<div class="edit" style="left:368px;top:744px;width:32px;height:19px;background:#d8d4cc;border:2px solid #606060;border-width:2px 1px 1px 2px"><div class="t" style="left:1px;top:2px">0</div></div>
<div class="btn" style="left:384px;top:746px;width:15px;height:8px;border-width:1px;border-color:#fff #606060 #606060 #fff"></div>
<div class="btn" style="left:384px;top:754px;width:15px;height:8px;border-width:1px;border-color:#fff #606060 #606060 #fff"></div>
<svg class="ab" style="left:388px;top:748px" width="7" height="14"><path d="M1.5,3.5 L5.5,3.5 L3.5,1.5Z M1.5,9.5 L5.5,9.5 L3.5,11.5Z" fill="#000"/></svg>
<div class="edit" style="left:407px;top:744px;width:32px;height:19px;background:#d8d4cc;border:2px solid #606060;border-width:2px 1px 1px 2px"><div class="t" style="left:1px;top:2px">1</div></div>
<div class="btn" style="left:423px;top:746px;width:15px;height:8px;border-width:1px;border-color:#fff #606060 #606060 #fff"></div>
<div class="btn" style="left:423px;top:754px;width:15px;height:8px;border-width:1px;border-color:#fff #606060 #606060 #fff"></div>
<svg class="ab" style="left:427px;top:748px" width="7" height="14"><path d="M1.5,3.5 L5.5,3.5 L3.5,1.5Z M1.5,9.5 L5.5,9.5 L3.5,11.5Z" fill="#000"/></svg>
<div class="cb" style="left:474px;top:746px;background:#f4f4f4"></div>
<div class="t" style="left:494px;top:748px">M</div>
<div class="t" style="left:569px;top:747px">D</div>
<div class="edit" style="left:587px;top:743px;width:30px;height:19px;background:#f0f0f0;text-align:center;color:#000"><div class="ab" style="left:0;right:0;top:2px;line-height:13px">0</div></div>
<div class="t" style="left:627px;top:747px">V1</div>
<div class="edit" style="left:650px;top:743px;width:30px;height:19px;background:#f0f0f0;text-align:center;color:#000"><div class="ab" style="left:0;right:0;top:2px;line-height:13px">0</div></div>
<div class="t" style="left:689px;top:747px">V2</div>
<div class="edit" style="left:713px;top:743px;width:30px;height:19px;background:#f0f0f0;text-align:center;color:#a0a0a0"><div class="ab" style="left:0;right:0;top:2px;line-height:13px">0</div></div>
<div class="t" style="left:779px;top:747px">P1</div>
<div class="edit" style="left:797px;top:743px;width:54px;height:19px;background:#f0f0f0;text-align:center;color:#000"><div class="ab" style="left:0;right:0;top:2px;line-height:13px">0</div></div>
<div class="t" style="left:860px;top:747px">RIU0 122610</div>
<div class="t" style="left:932px;top:747px">P2</div>
<div class="edit" style="left:957px;top:744px;width:56px;height:19px;text-align:center;color:#a0a0a0"><div class="ab" style="left:0;right:0;top:2px;line-height:13px">0</div></div>
<div class="btn" style="left:1094px;top:740px;width:95px;height:23px;line-height:20px;border:1px solid #000;box-shadow:inset -1px -1px 0 #404040, inset -2px -2px 0 #808080, inset 1px 1px 0 #fff">Рассчитать ГО</div>
<div class="t" style="left:1198px;top:747px">-1824,88 п.</div>
<div class="ab" style="left:1273px;top:740px;width:24px;height:23px;border-right:2px solid #000;border-bottom:2px solid #000;background:#f4f4f4"></div>
<div class="ab" style="left:1281px;top:757px;width:7px;height:1px;background:#000"></div>
<div class="ab" style="left:12px;top:770px;width:1285px;height:164px;background:#f4f4f4;border-top:2px solid #000;border-left:2px solid #000;border-bottom:1px solid #000;border-right:1px solid #000"></div>
<div class="ab" style="left:14px;top:772px;width:1282px;height:29px;background:#d4d4d4"></div>
<div class="t" style="left:12px;width:51px;top:781px;text-align:center;line-height:13px">Расчет</div>
<div class="ab" style="left:63px;top:772px;width:1px;height:29px;background:#fff"></div>
<div class="ab" style="left:62px;top:772px;width:1px;height:29px;background:#a0a0a0"></div>
<div class="t" style="left:63px;width:241px;top:781px;text-align:center;line-height:13px">Код бумаги</div>
<div class="ab" style="left:304px;top:772px;width:1px;height:29px;background:#fff"></div>
<div class="ab" style="left:303px;top:772px;width:1px;height:29px;background:#a0a0a0"></div>
<div class="t" style="left:304px;width:69px;top:774px;text-align:center;line-height:13px">Тип
опциона</div>
<div class="ab" style="left:373px;top:772px;width:1px;height:29px;background:#fff"></div>
<div class="ab" style="left:372px;top:772px;width:1px;height:29px;background:#a0a0a0"></div>
<div class="t" style="left:373px;width:87px;top:774px;text-align:center;line-height:13px">Дата
погашения</div>
<div class="ab" style="left:460px;top:772px;width:1px;height:29px;background:#fff"></div>
<div class="ab" style="left:459px;top:772px;width:1px;height:29px;background:#a0a0a0"></div>
<div class="t" style="left:460px;width:102px;top:774px;text-align:center;line-height:13px">Дней до
погашения</div>
<div class="ab" style="left:562px;top:772px;width:1px;height:29px;background:#fff"></div>
<div class="ab" style="left:561px;top:772px;width:1px;height:29px;background:#a0a0a0"></div>
<div class="t" style="left:562px;width:72px;top:781px;text-align:center;line-height:13px">Количество</div>
<div class="ab" style="left:634px;top:772px;width:1px;height:29px;background:#fff"></div>
<div class="ab" style="left:633px;top:772px;width:1px;height:29px;background:#a0a0a0"></div>
<div class="t" style="left:634px;width:81px;top:774px;text-align:center;line-height:13px">Цена
открытия</div>
<div class="ab" style="left:715px;top:772px;width:1px;height:29px;background:#fff"></div>
<div class="ab" style="left:714px;top:772px;width:1px;height:29px;background:#a0a0a0"></div>
<div class="t" style="left:715px;width:127px;top:774px;text-align:center;line-height:13px">Волатильность
открытия</div>
<div class="ab" style="left:842px;top:772px;width:1px;height:29px;background:#fff"></div>
<div class="ab" style="left:841px;top:772px;width:1px;height:29px;background:#a0a0a0"></div>
<div class="t" style="left:842px;width:105px;top:774px;text-align:center;line-height:13px">Теоретическая
цена</div>
<div class="ab" style="left:947px;top:772px;width:1px;height:29px;background:#fff"></div>
<div class="ab" style="left:946px;top:772px;width:1px;height:29px;background:#a0a0a0"></div>
<div class="t" style="left:947px;width:52px;top:781px;text-align:center;line-height:13px">Профит</div>
<div class="ab" style="left:999px;top:772px;width:1px;height:29px;background:#fff"></div>
<div class="ab" style="left:998px;top:772px;width:1px;height:29px;background:#a0a0a0"></div>
<div class="t" style="left:999px;width:90px;top:781px;text-align:center;line-height:13px">Волатильность</div>
<div class="ab" style="left:1089px;top:772px;width:1px;height:29px;background:#fff"></div>
<div class="ab" style="left:1088px;top:772px;width:1px;height:29px;background:#a0a0a0"></div>
<div class="t" style="left:1089px;width:51px;top:781px;text-align:center;line-height:13px">Дельта</div>
<div class="ab" style="left:1140px;top:772px;width:1px;height:29px;background:#fff"></div>
<div class="ab" style="left:1139px;top:772px;width:1px;height:29px;background:#a0a0a0"></div>
<div class="t" style="left:1140px;width:48px;top:781px;text-align:center;line-height:13px">Гамма</div>
<div class="ab" style="left:1188px;top:772px;width:1px;height:29px;background:#fff"></div>
<div class="ab" style="left:1187px;top:772px;width:1px;height:29px;background:#a0a0a0"></div>
<div class="t" style="left:1188px;width:38px;top:781px;text-align:center;line-height:13px">Вега</div>
<div class="ab" style="left:1226px;top:772px;width:1px;height:29px;background:#fff"></div>
<div class="ab" style="left:1225px;top:772px;width:1px;height:29px;background:#a0a0a0"></div>
<div class="t" style="left:1226px;width:44px;top:781px;text-align:center;line-height:13px">Тета</div>
<div class="ab" style="left:1270px;top:772px;width:1px;height:29px;background:#fff"></div>
<div class="ab" style="left:1269px;top:772px;width:1px;height:29px;background:#a0a0a0"></div>
<svg class="ab" style="left:1279px;top:783px" width="8" height="10"><path d="M0.6,0.5 L7.4,9.5 M7.4,0.5 L0.6,9.5" stroke="#000" stroke-width="1.1"/></svg>
<div class="ab" style="left:14px;top:800px;width:1282px;height:1px;background:#808080"></div>
<div class="ab" style="left:14px;top:823px;width:1282px;height:1px;background:#000"></div>
<div class="ab" style="left:14px;top:845px;width:1282px;height:1px;background:#000"></div>
<div class="ab" style="left:14px;top:867px;width:1282px;height:1px;background:#000"></div>
<div class="ab" style="left:14px;top:889px;width:1282px;height:1px;background:#000"></div>
<div class="ab" style="left:14px;top:911px;width:1282px;height:1px;background:#000"></div>
<div class="ab" style="left:14px;top:933px;width:1282px;height:1px;background:#000"></div>
<div class="ab" style="left:63px;top:801px;width:1px;height:132px;background:#000"></div>
<div class="ab" style="left:304px;top:801px;width:1px;height:132px;background:#000"></div>
<div class="ab" style="left:373px;top:801px;width:1px;height:132px;background:#000"></div>
<div class="ab" style="left:460px;top:801px;width:1px;height:132px;background:#000"></div>
<div class="ab" style="left:562px;top:801px;width:1px;height:132px;background:#000"></div>
<div class="ab" style="left:634px;top:801px;width:1px;height:132px;background:#000"></div>
<div class="ab" style="left:715px;top:801px;width:1px;height:132px;background:#000"></div>
<div class="ab" style="left:842px;top:801px;width:1px;height:132px;background:#000"></div>
<div class="ab" style="left:947px;top:801px;width:1px;height:132px;background:#000"></div>
<div class="ab" style="left:999px;top:801px;width:1px;height:132px;background:#000"></div>
<div class="ab" style="left:1089px;top:801px;width:1px;height:132px;background:#000"></div>
<div class="ab" style="left:1140px;top:801px;width:1px;height:132px;background:#000"></div>
<div class="ab" style="left:1188px;top:801px;width:1px;height:132px;background:#000"></div>
<div class="ab" style="left:1226px;top:801px;width:1px;height:132px;background:#000"></div>
<div class="ab" style="left:1270px;top:801px;width:1px;height:132px;background:#000"></div>
<div class="cb" style="left:32px;top:806px"><svg width="9" height="9" viewBox="0 0 9 9"><path d="M1.2,3.8 L3.4,6.6 L8,1.6" fill="none" stroke="#000" stroke-width="2.3"/></svg></div>
<div class="t" style="left:64px;width:240px;top:806px;text-align:center">RI105000BS0</div>
<div class="t" style="left:305px;width:68px;top:806px;text-align:center">Put</div>
<div class="t" style="left:374px;width:86px;top:806px;text-align:center">16.07.2020</div>
<div class="t" style="left:461px;width:101px;top:806px;text-align:center">8</div>
<div class="t" style="left:563px;width:71px;top:806px;text-align:center">-3</div>
<div class="t" style="left:635px;width:80px;top:806px;text-align:center">1130</div>
<div class="t" style="left:716px;width:126px;top:806px;text-align:center">96,92</div>
<div class="t" style="left:843px;width:104px;top:806px;text-align:center">41,98</div>
<div class="ab" style="left:948px;top:801px;width:51px;height:22px;background:#90ee90"></div>
<div class="t" style="left:948px;width:51px;top:806px;text-align:center">3264,06</div>
<div class="t" style="left:1000px;width:89px;top:806px;text-align:center">48,47</div>
<div class="t" style="left:1090px;width:50px;top:806px;text-align:center">0,04</div>
<div class="t" style="left:1141px;width:47px;top:806px;text-align:center">-1,2E-05</div>
<div class="t" style="left:1189px;width:37px;top:806px;text-align:center">-18,59</div>
<div class="t" style="left:1227px;width:43px;top:806px;text-align:center">57,23</div>
<div class="btn" style="left:1271px;top:801px;width:25px;height:23px;background:#f2f2f2;border-color:#fff #303030 #303030 #fff"></div>
<svg class="ab" style="left:1279px;top:808px" width="8" height="10"><path d="M0.6,0.5 L7.4,9.5 M7.4,0.5 L0.6,9.5" stroke="#000" stroke-width="1.1"/></svg>
<div class="ab" style="left:14px;top:824px;width:49px;height:21px;background:#0a246a"></div>
<div class="cb" style="left:32px;top:829px"><svg width="9" height="9" viewBox="0 0 9 9"><path d="M1.2,3.8 L3.4,6.6 L8,1.6" fill="none" stroke="#000" stroke-width="2.3"/></svg></div>
<div class="t" style="left:64px;width:240px;top:829px;text-align:center">RI117500BS0</div>
<div class="t" style="left:305px;width:68px;top:829px;text-align:center">Put</div>
<div class="t" style="left:374px;width:86px;top:829px;text-align:center">16.07.2020</div>
<div class="t" style="left:461px;width:101px;top:829px;text-align:center">8</div>
<div class="t" style="left:563px;width:71px;top:829px;text-align:center">1</div>
<div class="t" style="left:635px;width:80px;top:829px;text-align:center">4360</div>
<div class="t" style="left:716px;width:126px;top:829px;text-align:center">93,96</div>
<div class="t" style="left:843px;width:104px;top:829px;text-align:center">573,5</div>
<div class="ab" style="left:948px;top:824px;width:51px;height:21px;background:#ffb6c1"></div>
<div class="t" style="left:948px;width:51px;top:829px;text-align:center">-3786,5</div>
<div class="t" style="left:1000px;width:89px;top:829px;text-align:center">32,28</div>
<div class="t" style="left:1090px;width:50px;top:829px;text-align:center">-0,18</div>
<div class="t" style="left:1141px;width:47px;top:829px;text-align:center">4,5E-05</div>
<div class="t" style="left:1189px;width:37px;top:829px;text-align:center">46,98</div>
<div class="t" style="left:1227px;width:43px;top:829px;text-align:center">-96,31</div>
<div class="btn" style="left:1271px;top:824px;width:25px;height:22px;background:#f2f2f2;border-color:#fff #303030 #303030 #fff"></div>
<svg class="ab" style="left:1279px;top:831px" width="8" height="10"><path d="M0.6,0.5 L7.4,9.5 M7.4,0.5 L0.6,9.5" stroke="#000" stroke-width="1.1"/></svg>
<div class="cb" style="left:32px;top:851px"><svg width="9" height="9" viewBox="0 0 9 9"><path d="M1.2,3.8 L3.4,6.6 L8,1.6" fill="none" stroke="#000" stroke-width="2.3"/></svg></div>
<div class="t" style="left:64px;width:240px;top:851px;text-align:center">RI117500BG0</div>
<div class="t" style="left:305px;width:68px;top:851px;text-align:center">Call</div>
<div class="t" style="left:374px;width:86px;top:851px;text-align:center">16.07.2020</div>
<div class="t" style="left:461px;width:101px;top:851px;text-align:center">8</div>
<div class="t" style="left:563px;width:71px;top:851px;text-align:center">-1</div>
<div class="t" style="left:635px;width:80px;top:851px;text-align:center">5050</div>
<div class="t" style="left:716px;width:126px;top:851px;text-align:center">0</div>
<div class="t" style="left:843px;width:104px;top:851px;text-align:center">5683,5</div>
<div class="ab" style="left:948px;top:846px;width:51px;height:21px;background:#ffb6c1"></div>
<div class="t" style="left:948px;width:51px;top:851px;text-align:center">-633,5</div>
<div class="t" style="left:1000px;width:89px;top:851px;text-align:center">32,28</div>
<div class="t" style="left:1090px;width:50px;top:851px;text-align:center">-0,82</div>
<div class="t" style="left:1141px;width:47px;top:851px;text-align:center">-4,5E-05</div>
<div class="t" style="left:1189px;width:37px;top:851px;text-align:center">-46,98</div>
<div class="t" style="left:1227px;width:43px;top:851px;text-align:center">96,31</div>
<div class="btn" style="left:1271px;top:846px;width:25px;height:22px;background:#f2f2f2;border-color:#fff #303030 #303030 #fff"></div>
<svg class="ab" style="left:1279px;top:853px" width="8" height="10"><path d="M0.6,0.5 L7.4,9.5 M7.4,0.5 L0.6,9.5" stroke="#000" stroke-width="1.1"/></svg>
<div class="cb" style="left:32px;top:873px"><svg width="9" height="9" viewBox="0 0 9 9"><path d="M1.2,3.8 L3.4,6.6 L8,1.6" fill="none" stroke="#000" stroke-width="2.3"/></svg></div>
<div class="t" style="left:64px;width:240px;top:873px;text-align:center">RI122500BG0</div>
<div class="t" style="left:305px;width:68px;top:873px;text-align:center">Call</div>
<div class="t" style="left:374px;width:86px;top:873px;text-align:center">16.07.2020</div>
<div class="t" style="left:461px;width:101px;top:873px;text-align:center">8</div>
<div class="t" style="left:563px;width:71px;top:873px;text-align:center">1</div>
<div class="t" style="left:635px;width:80px;top:873px;text-align:center">2630</div>
<div class="t" style="left:716px;width:126px;top:873px;text-align:center">35,86</div>
<div class="t" style="left:843px;width:104px;top:873px;text-align:center">2060,85</div>
<div class="ab" style="left:948px;top:868px;width:51px;height:21px;background:#ffb6c1"></div>
<div class="t" style="left:948px;width:51px;top:873px;text-align:center">-569,15</div>
<div class="t" style="left:1000px;width:89px;top:873px;text-align:center">27,93</div>
<div class="t" style="left:1090px;width:50px;top:873px;text-align:center">0,52</div>
<div class="t" style="left:1141px;width:47px;top:873px;text-align:center">7,9E-05</div>
<div class="t" style="left:1189px;width:37px;top:873px;text-align:center">71,77</div>
<div class="t" style="left:1227px;width:43px;top:873px;text-align:center">-127,32</div>
<div class="btn" style="left:1271px;top:868px;width:25px;height:22px;background:#f2f2f2;border-color:#fff #303030 #303030 #fff"></div>
<svg class="ab" style="left:1279px;top:875px" width="8" height="10"><path d="M0.6,0.5 L7.4,9.5 M7.4,0.5 L0.6,9.5" stroke="#000" stroke-width="1.1"/></svg>
<div class="cb" style="left:32px;top:895px"><svg width="9" height="9" viewBox="0 0 9 9"><path d="M1.2,3.8 L3.4,6.6 L8,1.6" fill="none" stroke="#000" stroke-width="2.3"/></svg></div>
<div class="t" style="left:64px;width:240px;top:895px;text-align:center">FixedProfit</div>
<div class="ab" style="left:948px;top:890px;width:51px;height:21px;background:#90ee90"></div>
<div class="t" style="left:948px;width:51px;top:895px;text-align:center">350</div>
<div class="btn" style="left:1271px;top:890px;width:25px;height:22px;background:#f2f2f2;border-color:#fff #303030 #303030 #fff"></div>
<svg class="ab" style="left:1279px;top:897px" width="8" height="10"><path d="M0.6,0.5 L7.4,9.5 M7.4,0.5 L0.6,9.5" stroke="#000" stroke-width="1.1"/></svg>
<div class="cb" style="left:32px;top:917px"><svg width="9" height="9" viewBox="0 0 9 9"><path d="M1.2,3.8 L3.4,6.6 L8,1.6" fill="none" stroke="#000" stroke-width="2.3"/></svg></div>
<div class="t" style="left:64px;width:240px;top:917px;text-align:center">Итого:</div>
<div class="ab" style="left:948px;top:912px;width:51px;height:21px;background:#ffb6c1"></div>
<div class="t" style="left:948px;width:51px;top:917px;text-align:center">-1375,09</div>
<div class="t" style="left:1090px;width:50px;top:917px;text-align:center">-0,44</div>
<div class="t" style="left:1141px;width:47px;top:917px;text-align:center">6,7E-05</div>
<div class="t" style="left:1189px;width:37px;top:917px;text-align:center">53,18</div>
<div class="t" style="left:1227px;width:43px;top:917px;text-align:center">-70,09</div>
<div class="btn" style="left:1271px;top:912px;width:25px;height:22px;background:#f2f2f2;border-color:#fff #303030 #303030 #fff"></div>
<svg class="ab" style="left:1279px;top:919px" width="8" height="10"><path d="M0.6,0.5 L7.4,9.5 M7.4,0.5 L0.6,9.5" stroke="#000" stroke-width="1.1"/></svg>
<div class="ab" style="left:141px;top:821px;width:860px;height:29px;border:3px solid #1ea0dc"></div>
<div class="ab" style="left:12px;top:933px;width:2px;height:5px;background:#000"></div>
<div class="ab" style="left:1296px;top:933px;width:1px;height:5px;background:#000"></div>
<div class="ab" style="left:6px;top:939px;width:1297px;height:23px;background:#d6d6d6"></div>
<div class="ab" style="left:1298px;top:947px;width:2px;height:2px;background:#808080;box-shadow:1px 1px 0 #fff"></div>
<div class="ab" style="left:1294px;top:951px;width:2px;height:2px;background:#808080;box-shadow:1px 1px 0 #fff"></div>
<div class="ab" style="left:1298px;top:951px;width:2px;height:2px;background:#808080;box-shadow:1px 1px 0 #fff"></div>
<div class="ab" style="left:1290px;top:955px;width:2px;height:2px;background:#808080;box-shadow:1px 1px 0 #fff"></div>
<div class="ab" style="left:1294px;top:955px;width:2px;height:2px;background:#808080;box-shadow:1px 1px 0 #fff"></div>
<div class="ab" style="left:1298px;top:955px;width:2px;height:2px;background:#808080;box-shadow:1px 1px 0 #fff"></div>
<div class="t" style="left:9px;top:944px">Время обновления 17 мс  Profit=-1375,09 Delta(Δ)=-0,44 Gamma(Γ)=6,7E-05 Vega=53,18 Theta(Θ)=-70,09</div>
<div class="ab" style="left:0;top:962px;width:1303px;height:45px;background:#d4d0c8;border-top:1px solid #808080;box-shadow:inset 0 1px 0 #fff, inset 0 2px 0 #fff"></div>
<div class="t" style="left:1063px;top:976px;font-size:12px;line-height:15px">RU</div>
<div class="ab" style="left:1083px;top:973px;width:2px;height:22px;border-left:1px solid #808080;border-right:1px solid #fff"></div>
<div class="ab" style="left:1087px;top:967px;width:214px;height:38px;border-top:1px solid #808080;border-left:1px solid #808080;border-right:1px solid #fff;border-bottom:1px solid #fff"></div>
<div class="t" style="left:1219px;top:971px;width:57px;text-align:center;font-size:11.5px;line-height:15px">21:32
08.07.2020</div>
<svg class="ab" style="left:1093px;top:977px" width="18" height="18" viewBox="0 0 18 18">
<rect x="4" y="1" width="11" height="15" fill="#8cc4ec" stroke="#5a9ad0" stroke-width="1"/>
<rect x="6" y="3" width="3" height="3" fill="#e04030"/><rect x="10" y="3" width="3" height="3" fill="#40a040"/>
<rect x="6" y="7" width="3" height="3" fill="#3060d0"/><rect x="10" y="7" width="3" height="3" fill="#f0c020"/>
<path d="M1.5,11 C0,7 10,3 16,4.5 C17.5,6 14,11 8,12.5" fill="none" stroke="#f0a030" stroke-width="1.4"/>
</svg>
<svg class="ab" style="left:1117px;top:977px" width="18" height="18" viewBox="0 0 18 18">
<rect x="2" y="0.5" width="5" height="5" fill="#e4e4e4" stroke="#606060" stroke-width="1"/>
<path d="M1,5 L8,5 L8,12 L6,14 L6,16 L3,16 L3,14 L1,12Z" fill="#707070"/>
<circle cx="11.5" cy="11.5" r="5.5" fill="#20a020" stroke="#106010" stroke-width="0.8"/>
<path d="M8.5,11.5 L10.8,14 L14.5,8.5" fill="none" stroke="#fff" stroke-width="1.6"/>
</svg>
<svg class="ab" style="left:1141px;top:977px" width="18" height="18" viewBox="0 0 18 18">
<path d="M1,6.5 L4,6.5 L8,2 L8,16 L4,11.5 L1,11.5Z" fill="#f0f0f0" stroke="#707070" stroke-width="1"/>
<path d="M10.5,6.5 Q12,9 10.5,11.5 M12.5,4.5 Q15,9 12.5,13.5 M14.5,2.5 Q18,9 14.5,15.5" fill="none" stroke="#707070" stroke-width="1.1"/>
</svg>
<svg class="ab" style="left:1165px;top:977px" width="18" height="18" viewBox="0 0 18 18">
<rect x="6.5" y="3.5" width="10" height="9" fill="#a8a8a8" stroke="#404040" stroke-width="1"/>
<rect x="7.5" y="4.5" width="8" height="7" fill="#b8b8b8" stroke="#fff" stroke-width="0.8"/>
<path d="M7,15.5 L16,15.5 M11.5,12.5 L11.5,15.5" stroke="#404040" stroke-width="2.2"/>
<path d="M7.5,15.5 L15.5,15.5 M11.5,13 L11.5,15" stroke="#fff" stroke-width="1"/>
<path d="M3.5,6 L3.5,17 M1.5,1 L1.5,4 Q1.5,6 3.5,6 Q5.5,6 5.5,4 L5.5,1" fill="none" stroke="#404040" stroke-width="2.4"/>
<path d="M3.5,6 L3.5,17 M1.5,1 L1.5,4 Q1.5,6 3.5,6 Q5.5,6 5.5,4 L5.5,1" fill="none" stroke="#fff" stroke-width="1"/>
</svg>
<svg class="ab" style="left:1189px;top:977px" width="18" height="18" viewBox="0 0 18 18">
<path d="M2.5,1 L2.5,17" stroke="#404040" stroke-width="2.6"/><path d="M2.5,1.5 L2.5,16.5" stroke="#fff" stroke-width="1"/>
<path d="M4,2.5 Q8,1 10,3 Q13,5 16.5,4 Q16,8 13,10 Q9,10.5 7,9.5 Q5,9 4,9.5Z" fill="#fafafa" stroke="#404040" stroke-width="1"/>
</svg>
<svg class="ab" style="left:1283px;top:980px" width="16" height="13" viewBox="0 0 16 13">
<rect x="0.5" y="0.5" width="15" height="12" fill="#3a6ad8" stroke="#8ab0f0" stroke-width="1"/>
<rect x="1" y="9.5" width="14" height="2.5" fill="#103070"/><circle cx="3" cy="9" r="1.5" fill="#60c0f0"/>
</svg>
</body></html>
